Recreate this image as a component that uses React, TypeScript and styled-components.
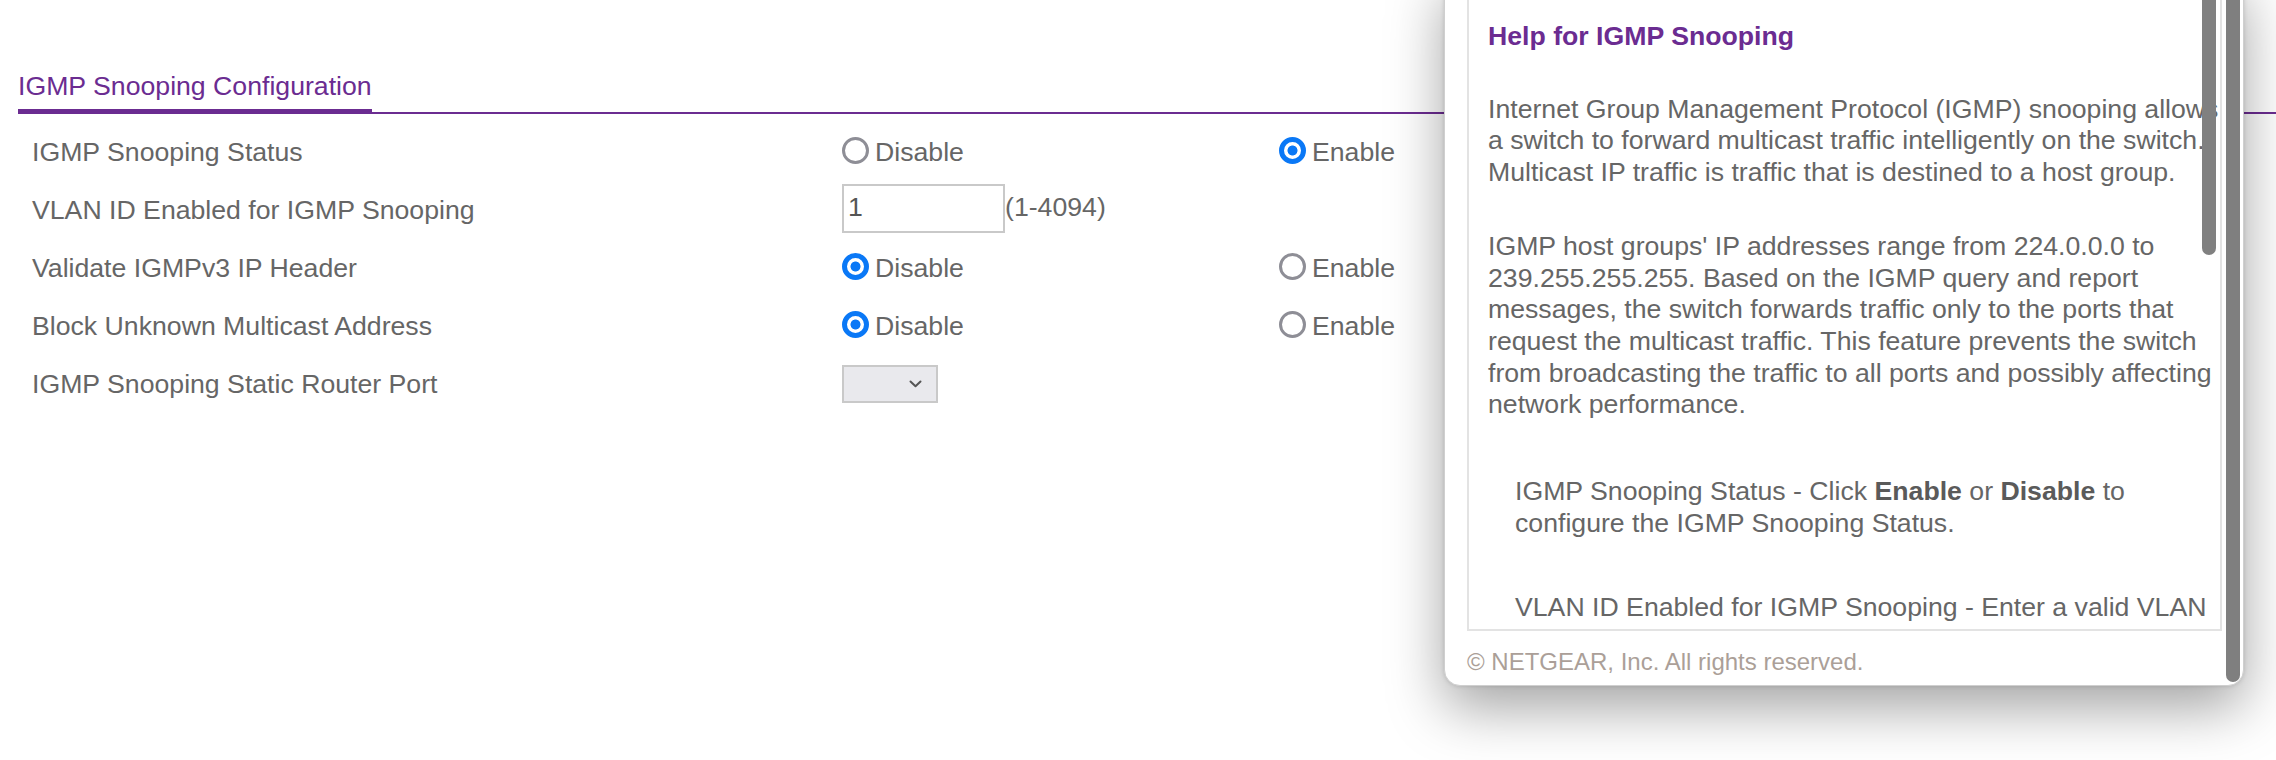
import styled, { createGlobalStyle } from "styled-components";

const purple = "#6b2c91";

const GlobalStyle = createGlobalStyle`
  html, body {
    margin: 0;
    padding: 0;
    background: #fff;
  }
  body {
    font-family: "Liberation Sans", Arial, sans-serif;
  }
`;

const Page = styled.div`
  position: relative;
  width: 2276px;
  height: 760px;
  overflow: hidden;
  box-sizing: border-box;
  padding-top: 71px;
  font-size: 26.67px;
  line-height: 31.7px;
  color: #666;
`;

const HeaderBar = styled.div`
  display: flex;
  margin-left: 18px;
  border-bottom: 2px solid ${purple};
`;

const Tab = styled.div`
  color: ${purple};
  padding-bottom: 6px;
  border-bottom: 5px solid ${purple};
  margin-bottom: -2px;
`;

const Form = styled.div`
  display: grid;
  grid-template-columns: 810px 437px auto;
  grid-auto-rows: 58px;
  align-items: center;
  margin-top: 10px;
  padding-left: 32px;
`;

const Label = styled.div`
  color: #666;
`;

const Cell = styled.div`
  display: flex;
  align-items: center;
`;

const Radio = styled.span<{ $checked?: boolean }>`
  box-sizing: border-box;
  flex: none;
  width: 27px;
  height: 27px;
  margin: 0 6px 5px 0;
  border-radius: 50%;
  border: ${(p) => (p.$checked ? "5px solid #0a78f6" : "3px solid #8e8e96")};
  background: ${(p) =>
    p.$checked
      ? "radial-gradient(circle, #0a78f6 0 4.6px, #fff 5.4px)"
      : "#fff"};
`;

const TextInput = styled.div`
  box-sizing: border-box;
  width: 163px;
  height: 49px;
  margin-bottom: 5px;
  padding: 0 4px;
  display: flex;
  align-items: center;
  border: 2px solid #c9c9c9;
  color: #555;
`;

const Hint = styled.span`
  margin-bottom: 5px;
`;

const Select = styled.div`
  box-sizing: border-box;
  width: 96px;
  height: 38px;
  margin-bottom: 2px;
  display: flex;
  align-items: center;
  justify-content: flex-end;
  padding-right: 14px;
  background: #e9e9ed;
  border: 2px solid #c9c9c9;
`;

const Popup = styled.div`
  position: absolute;
  left: 1444px;
  top: -30px;
  width: 800px;
  height: 716px;
  box-sizing: border-box;
  display: flex;
  padding-left: 22px;
  background: #fff;
  border: 1px solid #cfcfcf;
  border-radius: 16px;
  box-shadow: 0 22px 56px rgba(0, 0, 0, 0.36), 0 0 4px rgba(0, 0, 0, 0.15);
`;

const PopupMain = styled.div`
  width: 755px;
  display: flex;
  flex-direction: column;
`;

const Frame = styled.div`
  position: relative;
  flex: 1;
  overflow: hidden;
  border: 2px solid #e3e3e3;
`;

const FrameBody = styled.div`
  width: 732px;
  padding: 48px 0 0 19px;
  color: #666;
`;

const Thumb = styled.div<{ $height: number }>`
  position: absolute;
  top: 0;
  right: 4px;
  width: 14px;
  height: ${(p) => p.$height}px;
  border-radius: 7px;
  background: #808080;
`;

const HelpTitle = styled.h3`
  margin: 0 0 41px;
  font-size: 26.67px;
  line-height: 31.7px;
  font-weight: bold;
  color: ${purple};
`;

const Para = styled.p`
  margin: 0 0 42px;
`;

const Item = styled.p`
  margin: 55px 0 0 27px;
  & + & {
    margin-top: 53px;
  }
  b {
    color: #5a5a5a;
  }
`;

const Footer = styled.div`
  padding: 17px 0 9px;
  font-size: 24px;
  line-height: 28px;
  color: #ab9f98;
`;

const Track = styled.div`
  width: 14px;
  margin: 0 3px 3px 4px;
  border-radius: 0 0 7px 7px;
  background: #7f7f7f;
`;

const Chevron = () => (
  <svg width="13" height="8" viewBox="0 0 13 8">
    <polyline
      points="1.5,1.5 6.5,6.3 11.5,1.5"
      fill="none"
      stroke="#555"
      strokeWidth="2"
      strokeLinecap="round"
      strokeLinejoin="round"
    />
  </svg>
);

const Choice = ({ checked, text }: { checked?: boolean; text: string }) => (
  <Cell>
    <Radio $checked={checked} />
    {text}
  </Cell>
);

export default function App() {
  return (
    <>
      <GlobalStyle />
      <Page>
        <HeaderBar>
          <Tab>IGMP Snooping Configuration</Tab>
        </HeaderBar>
        <Form>
          <Label>IGMP Snooping Status</Label>
          <Choice text="Disable" />
          <Choice checked text="Enable" />

          <Label>VLAN ID Enabled for IGMP Snooping</Label>
          <Cell>
            <TextInput>1</TextInput>
            <Hint>(1-4094)</Hint>
          </Cell>
          <div />

          <Label>Validate IGMPv3 IP Header</Label>
          <Choice checked text="Disable" />
          <Choice text="Enable" />

          <Label>Block Unknown Multicast Address</Label>
          <Choice checked text="Disable" />
          <Choice text="Enable" />

          <Label>IGMP Snooping Static Router Port</Label>
          <Cell>
            <Select>
              <Chevron />
            </Select>
          </Cell>
          <div />
        </Form>

        <Popup>
          <PopupMain>
            <Frame>
              <FrameBody>
                <HelpTitle>Help for IGMP Snooping</HelpTitle>
                <Para>
                  Internet Group Management Protocol (IGMP) snooping allows a
                  switch to forward multicast traffic intelligently on the
                  switch. Multicast IP traffic is traffic that is destined to a
                  host group.
                </Para>
                <Para>
                  IGMP host groups' IP addresses range from 224.0.0.0 to
                  239.255.255.255. Based on the IGMP query and report messages,
                  the switch forwards traffic only to the ports that request the
                  multicast traffic. This feature prevents the switch from
                  broadcasting the traffic to all ports and possibly affecting
                  network performance.
                </Para>
                <Item>
                  IGMP Snooping Status - Click <b>Enable</b> or <b>Disable</b>{" "}
                  to configure the IGMP Snooping Status.
                </Item>
                <Item>
                  VLAN ID Enabled for IGMP Snooping - Enter a valid VLAN ID to
                  enable IGMP snooping for the VLAN. This field is available
                  only when IGMP Snooping Status is enabled.
                </Item>
              </FrameBody>
              <Thumb $height={282} />
            </Frame>
            <Footer>© NETGEAR, Inc. All rights reserved.</Footer>
          </PopupMain>
          <Track />
        </Popup>
      </Page>
    </>
  );
}
